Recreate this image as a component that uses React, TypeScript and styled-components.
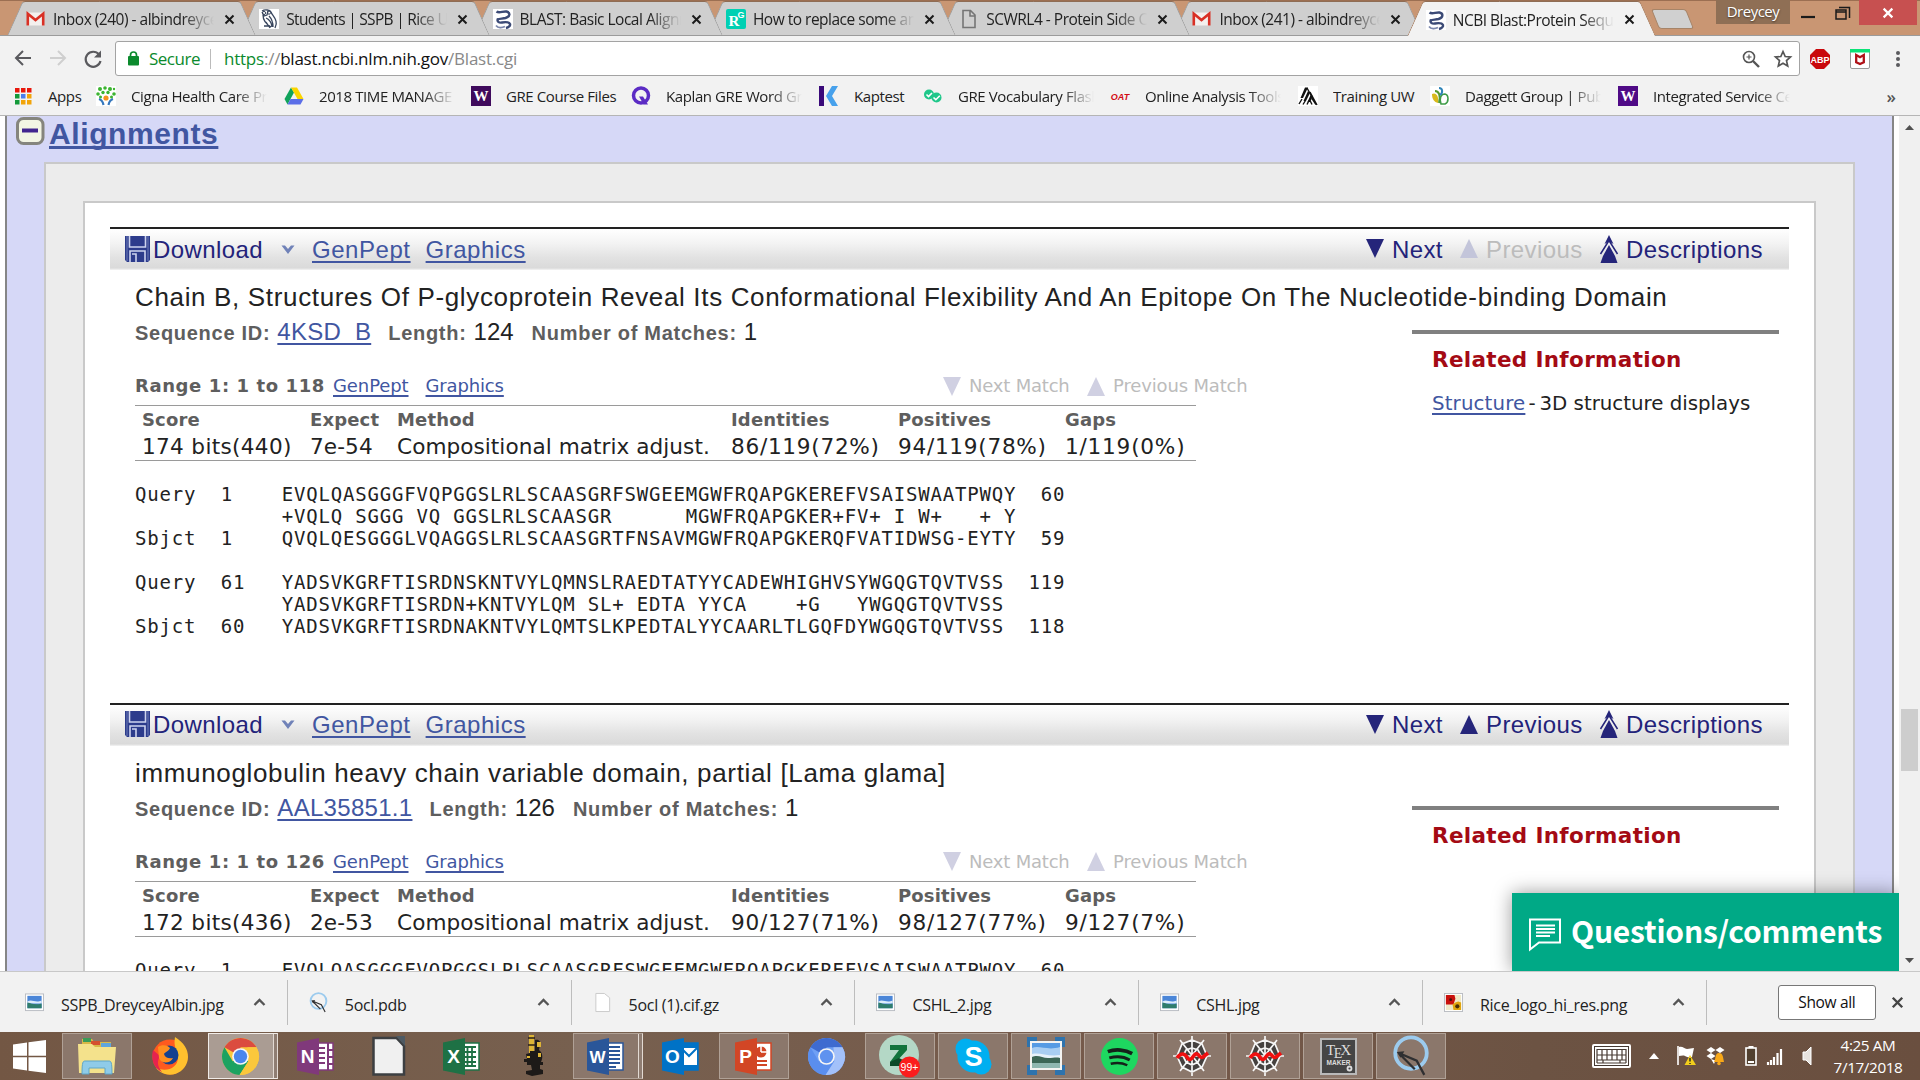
import React from "react";
import styled, { createGlobalStyle, css } from "styled-components";

const ui = `"Open Sans", "Noto Sans", sans-serif`;
const arial = `"Liberation Sans", Arial, sans-serif`;
const verdana = `"DejaVu Sans", Verdana, sans-serif`;
const mono = `"DejaVu Sans Mono", Consolas, monospace`;

const Global = createGlobalStyle`
  * { box-sizing: border-box; }
  body { margin: 0; background: #fff; overflow: hidden; }
  svg { display: block; flex: none; overflow: visible; }
`;

const Screen = styled.div`
  width: 1920px;
  height: 1080px;
  display: flex;
  flex-direction: column;
  overflow: hidden;
  font-family: ${ui};
`;

/* ---------- tab strip ---------- */
const TabStrip = styled.div`
  height: 36px;
  flex: none;
  display: flex;
  background: #c99673;
  border-top: 1px solid #9c6f52;
  border-bottom: 1px solid #9b9b9b;
  padding-left: 15px;
`;

const Tab = styled.div<{ $active?: boolean; $z: number }>`
  --fill: ${(p) => (p.$active ? "#f2f2f2" : "#cfcfcf")};
  --edge: ${(p) => (p.$active ? "#a57a5c" : "#9c9c9c")};
  width: 233.3px;
  height: ${(p) => (p.$active ? 35 : 34)}px;
  flex: none;
  position: relative;
  z-index: ${(p) => p.$z};
  display: flex;
  align-items: center;
  padding: 2px 0 0 11px;
  font-size: 15.5px;
  color: #222;
  &::before,
  &::after {
    content: "";
    position: absolute;
    z-index: -1;
    top: 0;
    bottom: 0;
    background: var(--fill);
    border-top: 1px solid #8f6d55;
  }
  &::before {
    left: 0;
    width: 60%;
    border-left: 1.5px solid var(--edge);
    transform: skewX(-24deg);
    border-top-left-radius: 3px;
  }
  &::after {
    right: 0;
    width: 60%;
    border-right: 1.5px solid var(--edge);
    transform: skewX(24deg);
    border-top-right-radius: 3px;
  }
`;

const Fading = styled.span<{ $w: number; $ls?: number; $fade?: boolean }>`
  width: ${(p) => p.$w}px;
  flex: none;
  white-space: pre;
  overflow: hidden;
  letter-spacing: ${(p) => p.$ls ?? 0}px;
  ${(p) =>
    p.$fade &&
    css`
      mask-image: linear-gradient(to right, #000 calc(100% - 32px), transparent);
    `}
`;

const TabTitle = styled(Fading)`
  margin: 0 10px 0 7px;
`;

const NewTab = styled.div`
  width: 35px;
  height: 20px;
  margin: 8px 0 0 7px;
  background: #d0d0d0;
  border: 1.5px solid #a68468;
  border-radius: 3px;
  transform: skewX(22deg);
`;

const WindowControls = styled.div`
  margin-left: auto;
  margin-top: -1px;
  display: flex;
  padding-right: 3px;
  height: 25px;
`;
const Profile = styled.div`
  width: 74px;
  height: 24px;
  background: #8f6f55;
  color: #fff;
  font-size: 15px;
  letter-spacing: -0.5px;
  line-height: 23px;
  text-align: center;
  text-shadow: 0 1px 2px #0008;
`;
const Control = styled.div<{ $w: number; $close?: boolean }>`
  width: ${(p) => p.$w}px;
  display: flex;
  align-items: center;
  justify-content: center;
  background: ${(p) => (p.$close ? "#c75050" : "none")};
`;

/* ---------- toolbar ---------- */
const Toolbar = styled.div`
  height: 44px;
  flex: none;
  background: #f2f2f2;
  display: flex;
  align-items: center;
  padding: 1px 16px 0 14px;
`;
const NavButtons = styled.div`
  display: flex;
  gap: 16.5px;
  width: 101px;
`;
const Omnibox = styled.div`
  width: 1685px;
  height: 35px;
  border: 1px solid #a3a3a3;
  border-radius: 3px;
  background: #fff;
  display: flex;
  align-items: center;
  padding: 0 7px 0 12px;
  font-size: 17px;
`;
const Secure = styled.span`
  color: #0b8a2d;
  width: 62px;
  margin-left: 10px;
  border-right: 1px solid #bbb;
  line-height: 20px;
  letter-spacing: -0.5px;
`;
const Url = styled.span`
  margin-left: 13px;
  flex: 1;
  color: #111;
  letter-spacing: -0.23px;
  i { font-style: normal; color: #888; }
  b { font-weight: 400; color: #0b8a2d; }
`;
const OmniIcons = styled.div`
  display: flex;
  gap: 14px;
`;
const Extensions = styled.div`
  display: flex;
  align-items: center;
  gap: 20px;
  margin-left: 10px;
`;

const Bookmarks = styled.div`
  height: 36px;
  flex: none;
  background: #f2f2f2;
  border-bottom: 1px solid #b5b5b5;
  display: flex;
  align-items: center;
  padding: 0 0 3px 13px;
  color: #222;
  font-size: 15px;
`;
const Bookmark = styled.div<{ $w: number }>`
  width: ${(p) => p.$w}px;
  flex: none;
  display: flex;
  align-items: center;
  gap: 15px;
`;
const More = styled.span`
  margin-left: auto;
  padding-right: 24px;
  font-size: 17px;
  font-weight: 600;
  color: #555;
`;

/* ---------- page ---------- */
const Viewport = styled.main`
  flex: 1;
  min-height: 0;
  display: flex;
  position: relative;
  background: #fff;
  padding-left: 5px;
`;
const Sheet = styled.div`
  width: 1889px;
  margin-right: 5px;
  border: solid #868686;
  border-width: 0 2px;
  background: #d6d8f7;
  overflow: hidden;
  padding: 0 37px;
`;
const SectionHead = styled.div`
  height: 46px;
  display: flex;
  margin-left: -28px;
`;
const SectionTitle = styled.a`
  margin-left: 4px;
  font: bold 30px/36px ${arial};
  letter-spacing: 0.6px;
  color: #4156a1;
  text-decoration: underline;
  text-decoration-thickness: 3px;
  text-underline-offset: 2px;
  text-decoration-skip-ink: none;
`;
const Frame = styled.div`
  background: #ececec;
  border: 2px solid #c9c9c9;
  height: 1400px;
  padding: 37px;
`;
const Paper = styled.div`
  background: #fff;
  border: 2px solid #c9c9c9;
  height: 1400px;
  padding: 24px 25px;
`;

const Alignment = styled.section`
  height: 475.500px;
  color: #222;
`;
const HeadBar = styled.div`
  height: 43px;
  border-top: 2px solid #222;
  background: linear-gradient(#fff, #f3f3f3 35%, #e2e2e2 70%, #dadada 95%, #f4f4f4);
  display: flex;
  align-items: center;
  padding: 0 25px 0 15px;
  font: 24px/30px ${arial};
  color: #23237a;
  svg { margin-top: -2px; }
`;
const Link = styled.a<{ $ml?: number; $ls?: number }>`
  color: #4156a1;
  text-decoration: underline;
  text-decoration-skip-ink: none;
  text-decoration-thickness: 1.5px;
  text-underline-offset: 3px;
  margin-left: ${(p) => p.$ml ?? 0}px;
  letter-spacing: ${(p) => p.$ls ?? 0}px;
`;
const Label = styled.span<{ $w: number; $ls?: number; $pl?: number; $dim?: boolean }>`
  width: ${(p) => p.$w}px;
  padding-left: ${(p) => p.$pl ?? 0}px;
  flex: none;
  white-space: nowrap;
  letter-spacing: ${(p) => p.$ls ?? 0}px;
  ${(p) => p.$dim && "color: #bcbcbc;"}
`;
const Pager = styled.div`
  margin-left: auto;
  display: flex;
  align-items: center;
`;
const Title = styled.h3`
  margin: 9px 0 0 25px;
  font: 26px/36px ${arial};
  letter-spacing: 0.655px;
  white-space: nowrap;
`;
const Columns = styled.div`
  display: flex;
  padding: 0 10px 0 25px;
  justify-content: space-between;
`;
const SeqLine = styled.div`
  margin-top: 2px;
  height: 30px;
  display: flex;
  align-items: baseline;
  font: 24px/30px ${arial};
`;
const SeqKey = styled.b<{ $ml?: number }>`
  font-size: 20px;
  color: #5e5e5e;
  letter-spacing: 0.72px;
  margin: 0 7px 0 ${(p) => p.$ml ?? 0}px;
`;
const RangeLine = styled.div`
  margin-top: 27px;
  height: 31px;
  display: flex;
  align-items: flex-start;
  font: 18px/24px ${verdana};
  width: 1115px;
  color: #bcbcbc;
`;
const Range = styled.b`
  color: #5e5e5e;
  width: 198px;
  letter-spacing: 0.6px;
  white-space: nowrap;
`;
const MatchNav = styled.div`
  width: 307px;
  margin-left: auto;
  display: flex;
  align-items: center;
`;
const Stats = styled.div`
  width: 1061px;
  border: solid #9a9a9a;
  border-width: 1px 0;
  display: grid;
  grid-template-columns: 168px 87px 334px 167px 167px 1fr;
  grid-auto-rows: 27px;
  padding-left: 7px;
  font: 21.6px/27px ${verdana};
  white-space: nowrap;
  b { font-size: 18px; line-height: 27px; color: #5e5e5e; letter-spacing: 0.15px; }
`;
const Stat = styled.span<{ $ls: number }>`
  letter-spacing: ${(p) => p.$ls}px;
`;
const Sequence = styled.pre`
  margin: 22px 0 0;
  font: 19px/22px ${mono};
  letter-spacing: 0.8px;
`;
const Related = styled.aside`
  width: 367px;
  margin-top: 15px;
  border-top: 4px solid #808080;
  padding-left: 20px;
  font: 19.8px/26px ${verdana};
  white-space: nowrap;
  h4 { margin: 13px 0 18px; font-size: 21.5px; color: #a40a14; letter-spacing: 0.33px; }
`;
const Dash = styled.span`
  margin: 0 4px 0 3px;
`;

const Scrollbar = styled.div`
  width: 21px;
  background: #f0f0f0;
  display: flex;
  flex-direction: column;
  align-items: center;
  padding: 9px 0 8px;
`;
const Thumb = styled.div`
  width: 17px;
  height: 62px;
  margin: 579px 0 auto;
  background: #cdcdcd;
`;
const Feedback = styled.div`
  position: absolute;
  right: 21px;
  bottom: 0;
  width: 387px;
  height: 78px;
  background: #00a986;
  box-shadow: 0 0 18px #0006;
  clip-path: inset(-30px 0 0 -30px);
  color: #fff;
  display: flex;
  align-items: center;
  gap: 10px;
  padding: 0 0 4px 17px;
  font: bold 30px/40px "Noto Sans CJK SC", "Noto Sans", sans-serif;
  white-space: nowrap;
  letter-spacing: -0.2px;
  svg { margin-top: 8px; }
`;

/* ---------- downloads ---------- */
const Downloads = styled.div`
  height: 61px;
  flex: none;
  background: #f2f2f2;
  border-top: 1px solid #c8c8c8;
  display: flex;
  align-items: center;
  padding-left: 4px;
  font-size: 16px;
  color: #222;
`;
const Download = styled.div`
  width: 283.8px;
  height: 45px;
  border-right: 1px solid #bdbdbd;
  display: flex;
  align-items: center;
  padding: 0 21px 0 21px;
  gap: 17px;
  span { flex: 1; padding-top: 5px; letter-spacing: -0.3px; }
`;
const ShowAll = styled.button`
  margin-left: 71px;
  width: 98px;
  height: 35px;
  border: 1px solid #777;
  border-radius: 3px;
  background: #fff;
  font: 15.5px/30px ${ui};
  letter-spacing: -0.35px;
  padding: 0;
  color: #111;
  margin-right: 15px;
`;

/* ---------- taskbar ---------- */
const Taskbar = styled.div`
  height: 48px;
  flex: none;
  background: linear-gradient(90deg, #735744, #77604f 30%, #75594a 60%, #6c5343 80%, #6a4f3f);
  display: flex;
  align-items: center;
`;
const StartButton = styled.div`
  width: 61.500px;
  padding-left: 13px;
`;
const Task = styled.div<{ $open?: boolean; $active?: boolean; $stack?: boolean }>`
  width: 70px;
  height: 46px;
  margin-right: 3.05px;
  flex: none;
  display: flex;
  align-items: center;
  justify-content: center;
  border: 1px solid transparent;
  ${(p) => p.$open && "background: #8b776b; border-color: #b0a196;"}
  ${(p) => p.$active && "background: #aa9c93; border-color: #f1ece8;"}
  ${(p) => p.$stack && "border-right: 1px solid #e3dad3; box-shadow: inset -3px 0 0 #8f7d72, inset -4px 0 0 #e3dad3; padding-right: 5px;"}
`;
const Tray = styled.div`
  margin-left: auto;
  display: flex;
  align-items: center;
`;
const TrayItem = styled.div<{ $w: number }>`
  width: ${(p) => p.$w}px;
`;
const Clock = styled.div`
  width: 84px;
  margin-right: 10px;
  color: #fff;
  font-size: 15.3px;
  line-height: 22px;
  text-align: center;
  letter-spacing: -0.4px;
`;

/* ---------- icons ---------- */
const Glyph = ({ x = 10, y = 15, s = 14, c = "#fff", children, f = "Liberation Sans", w = 700 }: any) => (
  <text x={x} y={y} fontSize={s} fill={c} textAnchor="middle" fontFamily={f} fontWeight={w}>{children}</text>
);
const Svg = ({ s = 20, h, v = "0 0 20 20", children }: any) => (
  <svg width={s} height={h ?? s} viewBox={v} fill="none">{children}</svg>
);

const Gmail = () => (
  <Svg><rect x="1" y="3.5" width="17" height="13" rx="1" fill="#f4f0ee" /><path d="M1.8 16.5V4.8L9.5 11l7.7-6.2v11.7" stroke="#d93025" strokeWidth="2.6" /></Svg>
);
const Owl = () => (
  <Svg>
    <rect width="20" height="20" fill="#fff" />
    <path d="M3 2c3-2 8-1 9 1 1 3 4 5 5 9 1 3 0 5-1 7M4 6c0 5 3 9 8 12M3 3l2 4 3-1 1-4M7 9c3 1 6 5 6 9M10 7c3 3 4 6 4 11M5 17h5M7 13l4 6" stroke="#39465e" strokeWidth="1.3" />
    <circle cx="5" cy="4" r="1.6" stroke="#39465e" /><circle cx="10" cy="3.6" r="1.6" stroke="#39465e" />
  </Svg>
);
const Helix = () => (
  <Svg>
    <rect width="20" height="20" fill="#fff" />
    <path d="M3.500 2.500C6 4.500 10 2 13.500 2.500c4 1 4 5-1 6.500-3 .8-6 .5-8 1.500" stroke="#3b4a76" strokeWidth="2.400" />
    <path d="M5 9.500c-1.500 3 1 4.500 4 4s7-.5 8 1.500c.6 1.800-1.500 3.500-4 4" stroke="#3b4a76" strokeWidth="2.400" />
    <path d="M3 16.500c2 2.500 6 2.500 9 1" stroke="#7b87ac" strokeWidth="1.800" />
  </Svg>
);
const RGate = () => (
  <Svg><rect width="20" height="20" rx="2" fill="#00d0b3" /><Glyph x={8} y={17} s={15} f="Liberation Serif">R</Glyph><Glyph x={15} y={9} s={9}>G</Glyph></Svg>
);
const Page = () => (
  <Svg><path d="M4 1.500h7.500L16 6v12.500H4zM11 1.500V7h5" stroke="#757575" strokeWidth="1.600" /></Svg>
);
const Cross = ({ s = 11, c = "#1b1b1b", w = 2 }: any) => (
  <Svg s={s} v="0 0 11 11"><path d="M1.500 1.500l8 8M9.500 1.500l-8 8" stroke={c} strokeWidth={w} /></Svg>
);
const Back = () => <Svg s={18} v="0 0 18 18"><path d="M17 9H2M9 2L2 9l7 7" stroke="#5a5a5e" strokeWidth="2" /></Svg>;
const Forward = () => <Svg s={18} v="0 0 18 18"><path d="M1 9h15M9 2l7 7-7 7" stroke="#cfcfcf" strokeWidth="2" /></Svg>;
const Reload = () => (
  <Svg s={20} v="0 0 20 20"><path d="M16 5.500A7.500 7.500 0 1 0 17.500 12" stroke="#5a5a5e" strokeWidth="2.200" /><path d="M18 1.500V8.500h-7z" fill="#5a5a5e" /></Svg>
);
const Lock = () => (
  <Svg s={11} h={15} v="0 0 11 15"><rect y="5" width="11" height="9.500" rx="1" fill="#0b8a2d" /><path d="M2.500 6V4a3 3 0 0 1 6 0v2" stroke="#0b8a2d" strokeWidth="1.700" /></Svg>
);
const ZoomIn = () => (
  <Svg s={18} v="0 0 18 18"><circle cx="7" cy="7" r="5.500" stroke="#555" strokeWidth="1.600" /><path d="M11 11l6 6" stroke="#555" strokeWidth="2.400" /><path d="M4.500 7h5M7 4.500v5" stroke="#555" strokeWidth="1.200" /></Svg>
);
const Star = () => (
  <Svg s={18} v="0 0 18 18"><path d="M9 1.500l2.200 5 5.300.5-4 3.600 1.200 5.400L9 13.200 4.300 16l1.200-5.400-4-3.600 5.300-.5z" stroke="#555" strokeWidth="1.700" /></Svg>
);
const Abp = () => <Svg><path d="M6 0h8l6 6v8l-6 6H6l-6-6V6z" fill="#c9080c" /><Glyph y={13.500} s={9}>ABP</Glyph></Svg>;
const McAfee = () => (
  <Svg><rect x=".5" y=".5" width="19" height="19" rx="1.500" fill="#fff" stroke="#999" /><path d="M0 0h20v3.500H0z" fill="#0be377" /><path d="M6.200 6v7.200l3.800 1.800 3.800-1.800V6L10 8.200z" stroke="#b01218" strokeWidth="2.300" /></Svg>
);
const DotsIcon = styled.div`
  margin-left: 5px;
`;
const Dots = () => <DotsIcon><Svg s={6} h={18} v="0 0 6 18"><g fill="#5a5a5e"><circle cx="3" cy="3" r="2" /><circle cx="3" cy="9" r="2" /><circle cx="3" cy="15" r="2" /></g></Svg></DotsIcon>;

const AppsGrid = () => {
  const c = ["#e8170b", "#e8170b", "#e8170b", "#149a3a", "#4a7df0", "#f2a40a", "#149a3a", "#f2a40a", "#f2a40a"];
  return <Svg>{c.map((k, i) => <rect key={i} x={2 + (i % 3) * 6} y={2 + Math.floor(i / 3) * 6} width="4.500" height="4.500" fill={k} />)}</Svg>;
};
const Cigna = () => (
  <Svg>
    <rect width="20" height="20" fill="#fff" />
    <g fill="#3cb430"><circle cx="4" cy="3" r="2" /><circle cx="9" cy="2" r="1.800" /><circle cx="14" cy="3" r="2" /><circle cx="2" cy="8" r="1.800" /><circle cx="18" cy="8" r="1.800" /><circle cx="7" cy="6.500" r="1.700" /><circle cx="12" cy="6.500" r="1.700" /><circle cx="18" cy="3" r="1.200" /><circle cx="4.500" cy="11" r="1.500" /><circle cx="15.500" cy="11" r="1.500" /></g>
    <circle cx="10" cy="12" r="2.600" fill="#f6921e" />
    <path d="M3 13c3 1 4 3 4.500 6M17 13c-3 1-4 3-4.500 6" stroke="#3577bd" strokeWidth="2.200" />
  </Svg>
);
const Drive = () => (
  <Svg><path d="M7 1.500L.5 13l3 5.500 6.500-12z" fill="#11a35b" /><path d="M7 1.500h6L19.500 13h-6z" fill="#fbd500" /><path d="M6.500 13h13l-3 5.500h-13z" fill="#5b6ee8" /></Svg>
);
const HuskyW = ({ c = "#3f0a5c" }: any) => <Svg><rect width="20" height="20" fill={c} /><Glyph y={15} s={15} f="Liberation Serif">W</Glyph></Svg>;
const Quiz = () => <Svg><circle cx="10" cy="9.500" r="7.500" stroke="#5b2bc4" strokeWidth="3.500" /><path d="M8 10.500h4l5 8h-4.500z" fill="#5b2bc4" /></Svg>;
const Kaplan = () => <Svg><rect width="5" height="20" x="0" fill="#3a0a7a" /><path d="M13 0h6l-6 10 6 10h-6L7 10z" fill="#47a1ec" /></Svg>;
const Checks = () => (
  <Svg><circle cx="6" cy="8.500" r="5" fill="#1fc78a" /><circle cx="13.500" cy="11.500" r="5" fill="#1fc78a" /><path d="M3.500 8.500l2 2 3.500-3.500M10.500 11.500l2.300 2.200 4-4" stroke="#fff" strokeWidth="1.600" /></Svg>
);
const Oat = () => <Svg><text x="10" y="13.500" fontSize="9" fill="#d20c14" textAnchor="middle" fontFamily="Liberation Sans" fontWeight="700" fontStyle="italic">OAT</text></Svg>;
const TrainUw = () => (
  <Svg>
    <rect width="20" height="20" fill="#fff" />
    <path d="M7 1.500h3L5 12H2.500zM10 5l2 2-4 8H5.500zM13 8l2 2.500-3 5.500H9.500z" fill="#111" />
    <path d="M9 2l9 16M12 6l7 13M1 18l3-5M5 18.500l2.500-4M9 18.500l2-4M14 18.500l-2-4M18 18.500l-4-6" stroke="#111" strokeWidth="1.400" />
  </Svg>
);
const Daggett = () => (
  <Svg><rect width="20" height="20" fill="#fff" /><path d="M2 8c4-2 7 2 6 9-4-1-6-4-6-9z" fill="#d9b91c" /><path d="M5 5c4 0 6 5 4 12" stroke="#569b2e" strokeWidth="2" /><path d="M11 18c-2-6 0-10 4-10 4 1 4 8 0 10z" stroke="#3f9c48" strokeWidth="1.600" /><path d="M9 2c4 0 4 5 1 7" stroke="#2f84b8" strokeWidth="2" /></Svg>
);

const Collapse = () => (
  <Svg s={29} h={29} v="0 0 29 29"><rect x="1.500" y="2.500" width="25.500" height="25" rx="6" fill="#f3f5e4" stroke="#85857e" strokeWidth="3" /><path d="M6 14.500h16" stroke="#43268f" strokeWidth="4" /></Svg>
);
const Floppy = () => (
  <Svg s={25} h={26} v="0 0 25 26"><path d="M0 0h25v24l-2 2H2l-2-2z" fill="#2d3c8c" /><path d="M4.500 0v11h16V0M5 26V15h15v11M7 18h4v8" stroke="#cdd3ee" strokeWidth="1.600" /><path d="M2 0v25M23 0v25" stroke="#6f7cb8" /></Svg>
);
const Chevron = () => <Svg s={14} h={12} v="0 0 14 12"><path d="M.5 2.500H4L7 6l3-3.500h3.500L7 11z" fill="#7082b8" /></Svg>;
const Tri = ({ up, c = "#25257a", w = 18, h = 19 }: any) => (
  <Svg s={w} h={h} v="0 0 18 19"><path d={up ? "M9 0l9 19H0z" : "M0 0h18L9 19z"} fill={c} /></Svg>
);
const DoubleUp = () => (
  <Svg s={18} h={28} v="0 0 18 28"><path d="M9 0l4.500 9L9 6.500 4.500 9z" fill="#25257a" /><path d="M9 5.500l8.500 13.500M9 5.500L.5 19" stroke="#25257a" strokeWidth="1.500" /><path d="M9 10l6 11 2.500 7H.5L3 21z" fill="#25257a" /></Svg>
);
const Comment = () => (
  <Svg s={32} h={33} v="0 0 32 33"><path d="M1 1.500h30v23H10L1 31.500z" stroke="#fff" strokeWidth="2" /><path d="M7 7.500h19M7 11h19M7 14.500h19M7 18h14" stroke="#fff" strokeWidth="1.800" /></Svg>
);
const Arrow = ({ down }: any) => <Svg s={9} h={5} v="0 0 9 5"><path d={down ? "M0 0h9L4.500 5z" : "M4.500 0L9 5H0z"} fill="#505050" /></Svg>;
const Caret = () => <Svg s={13} h={8} v="0 0 13 8"><path d="M1.500 7l5-5 5 5" stroke="#555" strokeWidth="2.300" /></Svg>;

const Picture = () => (
  <Svg s={19}><rect x=".5" y="1" width="19" height="17.500" fill="#fff" stroke="#b9bcc2" /><rect x="2.500" y="3" width="15" height="13" fill="#4b86d8" /><path d="M2.500 9c5-3 8 2 15-1v3h-15z" fill="#dcecfa" /><path d="M2.500 10c5 1 8 3 15 1v5h-15z" fill="#2f7d6c" /></Svg>
);
const Flower = () => (
  <Svg s={19}><rect x=".5" y=".5" width="19" height="19" fill="#fff" stroke="#b9bcc2" /><path d="M2 2h16v16H2z" fill="#efe9c8" /><path d="M2 2h9l1 4-2 6H2z" fill="#c9100c" /><circle cx="7" cy="7" r="1.500" fill="#4d120a" /><path d="M9 12l3-2 3-1 3 1v8h-8z" fill="#e0a50f" /><circle cx="14" cy="14" r="2.200" fill="#493008" /></Svg>
);
const QuickQ = ({ s = 19 }: any) => (
  <Svg s={s} h={s * 1.1} v="0 0 20 22"><circle cx="10" cy="9.500" r="8.300" stroke="#9ccbee" strokeWidth="2" /><path d="M3.500 9.500l9.500 4 4 7.500M4 10l8 8" stroke="#2f2f31" strokeWidth="1.200" /><path d="M2.500 9l4-.5L4.500 12z" fill="#2f2f31" /></Svg>
);
const Blank = () => <Svg s={19}><path d="M3 .5h9L17.500 5v14.500H3z" fill="#fff" stroke="#c9c9c9" /></Svg>;

const Win = () => <Svg s={33} v="0 0 33 33"><path d="M0 4.500l14-2v13.200H0zM15.500 2.300L33 0v15.700H15.500zM0 17.200h14v13.200l-14-2zM15.500 17.200H33V33l-17.500-2.300z" fill="#fff" /></Svg>;
const Explorer = () => (
  <Svg s={40} v="0 0 40 40"><path d="M5 3h10l2 3h17v10H5z" fill="#d8b948" /><path d="M6 2h8v4H6z" fill="#3a9c58" /><path d="M14 5h9v4h-9z" fill="#d5502f" /><path d="M24 7h10v4H24z" fill="#5fa6dc" /><path d="M1 8h14l3 3h21l-2 26H2z" fill="#f4e28c" /><path d="M5 38c0-12 1-13 3-13h24c2 0 3 1 3 13h-7v-6H12v6z" fill="#8fcbe8" stroke="#5fa6c8" /></Svg>
);
const Firefox = () => (
  <Svg s={38} v="0 0 38 38"><circle cx="19" cy="20" r="17.500" fill="#ff5a1f" /><path d="M24 0c9 6 13 12 13 20A18 18 0 0 1 5 31c10 4 22 1 22-11 0-6-5-9-3-20z" fill="#ffc02e" /><path d="M2 13c-2 8 0 18 9 22-5-6-5-11-2-16z" fill="#e6234f" /><circle cx="18" cy="18" r="9.500" fill="#15418f" /><path d="M7 10c4-3 10-2 12 1-1 3-5 4-6 6 1 4 5 5 9 4-3 6-12 6-14 0z" fill="#ff8f1f" /></Svg>
);
const Chrome = ({ mono: m }: any) => (
  <Svg s={37} v="0 0 40 40"><circle cx="20" cy="20" r="20" fill={m ? "#6fa0f5" : "#fbc83c"} /><path d="M20 20L2.700 10A20 20 0 0 1 37.300 10H20z" fill={m ? "#3e6bd0" : "#db4c3f"} /><path d="M2.700 10A20 20 0 0 0 19 40L28.500 25 20 20 11.500 25z" fill={m ? "#5a8eee" : "#1ca261"} /><path d="M37.300 10A20 20 0 0 1 19 40l9.500-15-1-15z" fill={m ? "#a3c1fa" : "#fbc83c"} /><circle cx="20" cy="20" r="9" fill="#f5f5f5" /><circle cx="20" cy="20" r="7.200" fill={m ? "#5f92ef" : "#4a86ec"} /></Svg>
);
const Office = ({ c, l, k }: any) => (
  <Svg s={37} v="0 0 37 37">
    <rect x="18" y="5" width="18" height="27" fill={k === "mail" ? c : "#fff"} stroke={c} strokeWidth="1.500" />
    {k === "lines" && <path d="M21 9h12M21 13h12M21 17h12M21 21h12M21 25h12M21 29h8" stroke={c} strokeWidth="1.800" />}
    {k === "grid" && <path d="M21 9h12M21 14h12M21 19h12M21 24h12M21 28h12M24.500 8v21M29 8v21" stroke={c} strokeWidth="1.800" />}
    {k === "tabs" && <path d="M20 10h8M20 15h8M20 20h8M20 25h8M31 5v27M31 12h5M31 19h5M31 26h5" stroke={c} strokeWidth="2" />}
    {k === "pie" && <><circle cx="26" cy="14" r="5.500" fill={c} /><path d="M26 14V8M26 14h6" stroke="#fff" strokeWidth="1.500" /><path d="M21 23h11M21 27h11" stroke={c} strokeWidth="2" /></>}
    {k === "mail" && <><rect x="20" y="10" width="15" height="17" fill="#fff" /><path d="M20 11l7 7 8-8" stroke={c} strokeWidth="2" /></>}
    <path d="M0 4.500L22 0v37L0 32.500z" fill={c} /><Glyph x={10.500} y={25} s={k === "lines" ? 17 : 19}>{l}</Glyph>
  </Svg>
);
const Writer = () => <Svg s={34} h={40} v="0 0 34 40"><path d="M1.500 2h23L32 10v28.500H1.500z" fill="#f0f0f0" stroke="#3c3f42" strokeWidth="2.500" /><path d="M24 0h9v10z" fill="#4e5a63" /></Svg>;
const Microscope = () => (
  <Svg s={24} h={42} v="0 0 24 42">
    <path d="M6 0h5v18H6z" fill="#dcb436" /><path d="M5 3h7M5 10h7" stroke="#2a2118" strokeWidth="1.500" />
    <path d="M12 5c3-1 6 1 5 4l-1 6c4 3 4 8 2 12h2v3H4v-3H1v-3h3l-1-5 4-1v-2h5z" fill="#1d1a18" />
    <path d="M14 7h4v5h-4zM15 18h3v4h-3zM4 21h3v2H4z" fill="#dcb436" />
    <path d="M8 30h9v4l3 1v4L9 41l-6-2v-3l6-1z" fill="#1d1a18" />
  </Svg>
);
const Zotero = () => (
  <Svg s={42} v="0 0 42 42"><circle cx="20" cy="20" r="20" fill="#b4d8c6" /><path d="M11 10h17v5L17 27h11v4H11v-4l9-12h-9z" fill="#12733c" /><path d="M11 27l9-4 8 4v4H11z" fill="#0d4a28" /><circle cx="30.500" cy="32" r="10.500" fill="#fb1d1d" /><Glyph x={30.500} y={36} s={10.500} w={400}>99+</Glyph></Svg>
);
const Skype = () => (
  <Svg s={37} v="0 0 38 38"><circle cx="19" cy="19" r="16.500" fill="#00aff0" /><circle cx="11" cy="11" r="10.500" fill="#00aff0" /><circle cx="27" cy="27" r="10.500" fill="#00aff0" /><Glyph x={19} y={29} s={28}>S</Glyph></Svg>
);
const PhotoView = () => (
  <Svg s={38} v="0 0 38 38"><path d="M0 0h10v10H0zM28 0h10v10H28zM0 28h10v10H0zM28 28h10v10H28z" fill="#2e73ad" /><rect x="3" y="4" width="32" height="29" fill="#f4f4f2" /><rect x="5" y="6" width="28" height="25" fill="#569be4" /><path d="M5 11c7-3 16 3 28-1v9H5z" fill="#a9cef2" /><path d="M5 17c8-2 16 3 28 1v3H5z" fill="#e6f1fa" /><path d="M5 20c6-3 10 1 16 1s8-1 12 0v6H5z" fill="#3c6656" /><path d="M5 26h28v5H5z" fill="#8fb7b0" /></Svg>
);
const Spotify = () => (
  <Svg s={37} v="0 0 38 38"><circle cx="19" cy="19" r="19" fill="#1ed760" /><path d="M7 14c8-3 18-2 25 2" stroke="#14211a" strokeWidth="3.800" /><path d="M8.500 20.500c7-2 15-1.500 21 2" stroke="#14211a" strokeWidth="3" /><path d="M10 26.500c6-1.500 12-1 17 1.500" stroke="#14211a" strokeWidth="2.500" /></Svg>
);
const Spider = () => (
  <Svg s={40} v="0 0 40 40">
    <path d="M20 4l10 4 5 12-5 11-10 5-10-5-5-11L10 8z" fill="#45413f" />
    <path d="M20 4l10 4 5 12-5 11-10 5-10-5-5-11L10 8zM20 0v40M8 4l24 31M32 4L8 35M1 20h38M20 12l6 2 3 6-3 6-6 3-6-3-3-6 3-6z" stroke="#f6f6f6" strokeWidth="1.700" />
    <path d="M5 22c3-4 5-5 8-3s3 6 6 4 3-6 6-5 3 5 6 3l5-4" stroke="#f01010" strokeWidth="3.600" />
  </Svg>
);
const TexMaker = () => (
  <Svg s={37} h={37} v="0 0 37 37"><rect x="1" y="1" width="35" height="35" fill="#454545" stroke="#b9b9b9" strokeWidth="2" /><Glyph x={10.500} y={17} s={15} f="Liberation Serif" w={400} c="#ddd">T</Glyph><Glyph x={18} y={20} s={14} f="Liberation Serif" w={400} c="#ddd">E</Glyph><Glyph x={26} y={17} s={15} f="Liberation Serif" w={400} c="#ddd">X</Glyph><Glyph x={18.500} y={26.500} s={6.500} c="#ddd">MAKER</Glyph><circle cx="29.500" cy="30.500" r="2" stroke="#ddd" strokeWidth="1.800" /></Svg>
);

const KeyboardIcon = () => (
  <Svg s={39} h={24} v="0 0 39 24"><rect x="1" y="1" width="37" height="22" rx="1" fill="#463a33" stroke="#fff" strokeWidth="2" /><rect x="3" y="3" width="33" height="18" fill="#fff" /><path d="M5 5.500h29M5 11h29M5 16h29M5 19h29M5 5v14M10 5v11M15 5v11M20 5v11M25 5v11M30 5v11M34 5v14M11 16v3M28 16v3" stroke="#463a33" strokeWidth="1.200" /></Svg>
);
const Flag = () => (
  <Svg s={19} h={20} v="0 0 19 20"><path d="M1 0v19" stroke="#fff" strokeWidth="1.600" /><path d="M2 1c4-1 5 2 8 2s4-1 7-1l-2 9c-3 1-5 0-7-1s-4 0-6 0z" fill="#fff" /><path d="M13 9l6 10H7.500z" fill="#f2ce1c" /><path d="M13 12v3.500M13 17v1" stroke="#222" strokeWidth="1.400" /></Svg>
);
const Dropbox = () => (
  <Svg s={20}><g fill="#fff"><path d="M5 1l4.500 3L5 7 .5 4zM14 1l4.500 3L14 7 9.500 4zM5 7l4.500 3L5 13 .5 10zM5 13l4.500 1.500L8 18z" /></g><path d="M13 7c4 0 4 4 5 9H8c2-4 1-9 5-9z" fill="#f8a818" /><circle cx="13" cy="17.500" r="1.800" fill="#f8a818" /></Svg>
);
const Battery = () => <Svg s={12} h={20} v="0 0 12 20"><path d="M3.500 0h5v2h-5z" fill="#fff" /><rect x="1" y="2" width="10" height="17" fill="#51402f" stroke="#fff" strokeWidth="1.600" /><path d="M3 15h6v2H3z" fill="#fff" /></Svg>;
const Signal = () => <Svg s={16} h={18} v="0 0 16 18"><path d="M1 18v-3M4 18v-5M7 18v-8M10.500 18V6M14 18V2" stroke="#fff" strokeWidth="2.200" /></Svg>;
const Speaker = () => <Svg s={11} h={20} v="0 0 11 20"><path d="M1 6h3l5-5v18l-5-5H1z" fill="#e8e4e0" stroke="#fff" /></Svg>;

/* ---------- data ---------- */
const tabs: [React.FC, string][] = [
  [Gmail, "Inbox (240) - albindreyce"],
  [Owl, "Students | SSPB | Rice Un"],
  [Helix, "BLAST: Basic Local Alignm"],
  [RGate, "How to replace some am"],
  [Page, "SCWRL4 - Protein Side C"],
  [Gmail, "Inbox (241) - albindreyce"],
  [Helix, "NCBI Blast:Protein Seque"],
];
const bookmarks: [React.FC<any>, string, number, number][] = [
  [AppsGrid, "Apps", 83, 36],
  [Cigna, "Cigna Health Care Pr", 188, 136],
  [Drive, "2018 TIME MANAGE", 187, 136],
  [HuskyW, "GRE Course Files", 160, 125],
  [Quiz, "Kaplan GRE Word Gr", 188, 136],
  [Kaplan, "Kaptest", 104, 60],
  [Checks, "GRE Vocabulary Flash", 187, 136],
  [Oat, "Online Analysis Tools", 188, 136],
  [TrainUw, "Training UW", 132, 90],
  [Daggett, "Daggett Group | Pub", 188, 136],
  [() => <HuskyW c="#4f0a86" />, "Integrated Service Ce", 180, 137],
];
const downloads: [React.FC, string][] = [
  [Picture, "SSPB_DreyceyAlbin.jpg"],
  [QuickQ, "5ocl.pdb"],
  [Blank, "5ocl (1).cif.gz"],
  [Picture, "CSHL_2.jpg"],
  [Picture, "CSHL.jpg"],
  [Flower, "Rice_logo_hi_res.png"],
];

type Hit = { title: string; id: string; len: string; range: string; stats: string[]; seq: string; first?: boolean };
const statSpacing = [0.32, 0.1, 0.05, 0.72, 0.72, 0.78];
const hits: Hit[] = [
  {
    title: "Chain B, Structures Of P-glycoprotein Reveal Its Conformational Flexibility And An Epitope On The Nucleotide-binding Domain",
    id: "4KSD_B",
    len: "124",
    range: "1 to 118",
    stats: ["174 bits(440)", "7e-54", "Compositional matrix adjust.", "86/119(72%)", "94/119(78%)", "1/119(0%)"],
    first: true,
    seq: `Query  1    EVQLQASGGGFVQPGGSLRLSCAASGRFSWGEEMGWFRQAPGKEREFVSAISWAATPWQY  60
            +VQLQ SGGG VQ GGSLRLSCAASGR      MGWFRQAPGKER+FV+ I W+   + Y
Sbjct  1    QVQLQESGGGLVQAGGSLRLSCAASGRTFNSAVMGWFRQAPGKERQFVATIDWSG-EYTY  59

Query  61   YADSVKGRFTISRDNSKNTVYLQMNSLRAEDTATYYCADEWHIGHVSYWGQGTQVTVSS  119
            YADSVKGRFTISRDN+KNTVYLQM SL+ EDTA YYCA    +G   YWGQGTQVTVSS
Sbjct  60   YADSVKGRFTISRDNAKNTVYLQMTSLKPEDTALYYCAARLTLGQFDYWGQGTQVTVSS  118`,
  },
  {
    title: "immunoglobulin heavy chain variable domain, partial [Lama glama]",
    id: "AAL35851.1",
    len: "126",
    range: "1 to 126",
    stats: ["172 bits(436)", "2e-53", "Compositional matrix adjust.", "90/127(71%)", "98/127(77%)", "9/127(7%)"],
    seq: `Query  1    EVQLQASGGGFVQPGGSLRLSCAASGRFSWGEEMGWFRQAPGKEREFVSAISWAATPWQY  60`,
  },
];

const HitBlock = ({ h }: { h: Hit }) => (
  <Alignment>
    <HeadBar>
      <Floppy />
      <Label $w={131} $pl={3} $ls={0.42}>Download</Label>
      <Chevron />
      <Link $ml={17} $ls={0.55}>GenPept</Link>
      <Link $ml={15} $ls={0.5}>Graphics</Link>
      <Pager>
        <Tri />
        <Label $w={76} $pl={8} $ls={0.35}>Next</Label>
        <Tri up c={h.first ? "#c3c5da" : "#25257a"} />
        <Label $w={122} $pl={8} $ls={0.4} $dim={h.first}>Previous</Label>
        <DoubleUp />
        <Label $w={146} $pl={8} $ls={0.4}>Descriptions</Label>
      </Pager>
    </HeadBar>
    <Title>{h.title}</Title>
    <Columns>
      <div>
        <SeqLine>
          <SeqKey>Sequence ID:</SeqKey>
          <Link $ls={0.3}>{h.id}</Link>
          <SeqKey $ml={17}>Length:</SeqKey>
          {h.len}
          <SeqKey $ml={18}>Number of Matches:</SeqKey>1
        </SeqLine>
        <RangeLine>
          <Range>Range 1: {h.range}</Range>
          <Link $ls={-0.1}>GenPept</Link>
          <Link $ml={17} $ls={-0.15}>Graphics</Link>
          <MatchNav>
            <Tri c="#d0d0e2" />
            <Label $w={126} $pl={8} $ls={-0.2}>Next Match</Label>
            <Tri up c="#d0d0e2" />
            <Label $w={145} $pl={8} $ls={-0.15}>Previous Match</Label>
          </MatchNav>
        </RangeLine>
        <Stats>
          {["Score", "Expect", "Method", "Identities", "Positives", "Gaps"].map((c) => <b key={c}>{c}</b>)}
          {h.stats.map((s, i) => <Stat key={i} $ls={statSpacing[i]}>{s}</Stat>)}
        </Stats>
        <Sequence>{h.seq}</Sequence>
      </div>
      <Related>
        <h4>Related Information</h4>
        {h.first && <><Link $ls={0.15}>Structure</Link><Dash>-</Dash>3D structure displays</>}
      </Related>
    </Columns>
  </Alignment>
);

export default function App() {
  return (
    <Screen>
      <Global />
      <TabStrip>
        {tabs.map(([Icon, t], i) => (
          <Tab key={i} $active={i === 6} $z={i === 6 ? 20 : 10 - i}>
            <Icon />
            <TabTitle $w={161} $fade $ls={i === 1 ? -0.7 : -0.5}>{t}</TabTitle>
            <Cross />
          </Tab>
        ))}
        <NewTab />
        <WindowControls>
          <Profile>Dreycey</Profile>
          <Control $w={36}><Svg s={16} v="0 0 16 16"><path d="M1 12h14" stroke="#1b1b1b" strokeWidth="2.200" /></Svg></Control>
          <Control $w={33}><Svg s={15} v="0 0 15 15"><path d="M1 5h10v9H1zM1 7h10M4 2.500h10.500V13" stroke="#1b1b1b" strokeWidth="1.500" /></Svg></Control>
          <Control $w={58} $close><Cross s={12} c="#fff" /></Control>
        </WindowControls>
      </TabStrip>
      <Toolbar>
        <NavButtons><Back /><Forward /><Reload /></NavButtons>
        <Omnibox>
          <Lock />
          <Secure>Secure</Secure>
          <Url><b>https</b><i>://</i>blast.ncbi.nlm.nih.gov<i>/Blast.cgi</i></Url>
          <OmniIcons><ZoomIn /><Star /></OmniIcons>
        </Omnibox>
        <Extensions><Abp /><McAfee /><Dots /></Extensions>
      </Toolbar>
      <Bookmarks>
        {bookmarks.map(([Icon, t, w, tw], i) => (
          <Bookmark key={i} $w={w}><Icon /><Fading $w={tw} $ls={-0.4} $fade={tw > 130}>{t}</Fading></Bookmark>
        ))}
        <More>»</More>
      </Bookmarks>
      <Viewport>
        <Sheet>
          <SectionHead><Collapse /><SectionTitle>Alignments</SectionTitle></SectionHead>
          <Frame><Paper>{hits.map((h) => <HitBlock key={h.id} h={h} />)}</Paper></Frame>
        </Sheet>
        <Scrollbar><Arrow /><Thumb /><Arrow down /></Scrollbar>
        <Feedback><Comment />Questions/comments</Feedback>
      </Viewport>
      <Downloads>
        {downloads.map(([Icon, t], i) => <Download key={i}><Icon /><span>{t}</span><Caret /></Download>)}
        <ShowAll>Show all</ShowAll>
        <Cross s={13} c="#444" />
      </Downloads>
      <Taskbar>
        <StartButton><Win /></StartButton>
        <Task $open><Explorer /></Task>
        <Task><Firefox /></Task>
        <Task $open $active $stack><Chrome /></Task>
        <Task><Office c="#80397b" l="N" k="tabs" /></Task>
        <Task><Writer /></Task>
        <Task><Office c="#1e7145" l="X" k="grid" /></Task>
        <Task><Microscope /></Task>
        <Task $open $stack><Office c="#2a5699" l="W" k="lines" /></Task>
        <Task><Office c="#0072c6" l="O" k="mail" /></Task>
        <Task $open><Office c="#d24625" l="P" k="pie" /></Task>
        <Task><Chrome mono /></Task>
        <Task $open><Zotero /></Task>
        <Task $open><Skype /></Task>
        <Task $open><PhotoView /></Task>
        <Task $open><Spotify /></Task>
        <Task $open><Spider /></Task>
        <Task $open><Spider /></Task>
        <Task $open><TexMaker /></Task>
        <Task $open><QuickQ s={38} /></Task>
        <Tray>
          <TrayItem $w={57}><KeyboardIcon /></TrayItem>
          <TrayItem $w={28}><Svg s={10} h={6} v="0 0 10 6"><path d="M5 0l5 6H0z" fill="#fff" /></Svg></TrayItem>
          <TrayItem $w={29}><Flag /></TrayItem>
          <TrayItem $w={39}><Dropbox /></TrayItem>
          <TrayItem $w={22}><Battery /></TrayItem>
          <TrayItem $w={35}><Signal /></TrayItem>
          <TrayItem $w={24}><Speaker /></TrayItem>
          <Clock>4:25 AM<br />7/17/2018</Clock>
        </Tray>
      </Taskbar>
    </Screen>
  );
}
